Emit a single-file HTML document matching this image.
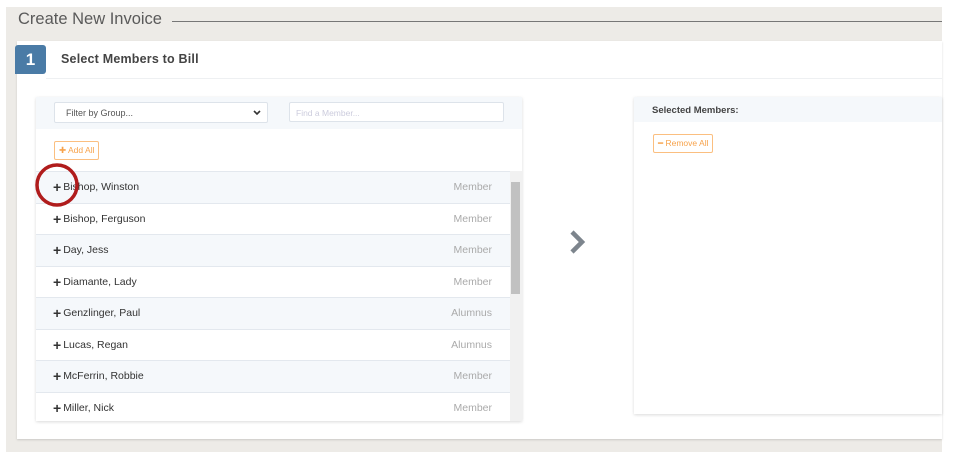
<!DOCTYPE html>
<html><head><style>
*{box-sizing:border-box;margin:0;padding:0}
body{width:954px;height:465px;background:#fff;position:relative;overflow:hidden;font-family:"Liberation Sans",sans-serif}
.bg{position:absolute;left:6px;top:7px;width:936px;height:445px;background:#edebe7}
.title{position:absolute;left:18px;top:10px;font-size:16.5px;color:#5a5a5a;}
.tline{position:absolute;left:172px;top:21px;width:770px;height:1px;background:#777}
.card{position:absolute;left:17px;top:41px;width:925px;height:398px;background:#fff;box-shadow:0 1px 2px rgba(0,0,0,.15)}
.badge{position:absolute;left:15px;top:45px;width:31px;height:29px;background:#4a7ba6;border-radius:3px 3px 3px 0;color:#fff;font-weight:bold;font-size:17px;text-align:center;line-height:29px}
.h{position:absolute;left:61px;top:52px;font-size:12.5px;color:#444;font-weight:bold;letter-spacing:.2px}
.hl{position:absolute;left:46px;top:78px;width:896px;height:1px;background:#eef0f2}
.lp{position:absolute;left:36px;top:97px;width:486px;height:324px;background:#fff;box-shadow:0 1px 3px rgba(0,0,0,.15)}
.lh{position:absolute;left:0;top:0;width:486px;height:32px;background:#f5f8fb}
.sel{position:absolute;left:18px;top:5px;width:214px;height:21px;border:1px solid #dde3ea;background:#fff;border-radius:2px;font-size:9px;color:#555;padding:5px 0 0 11px}
.sel svg{position:absolute;right:6px;top:7px}
.inp{position:absolute;left:253px;top:5px;width:215px;height:20px;border:1px solid #dde3ea;background:#fff;border-radius:2px;font-size:8.5px;color:#ccd;padding:5px 0 0 6px}
.btn{position:absolute;border:1px solid #fbbf80;border-radius:2px;color:#f7a34c;font-size:8.5px;padding:3px 4px;background:#fff}
.row{position:absolute;left:0;width:474px;height:31.5px;border-top:1px solid #e3e8ee;font-size:10.5px;color:#333;padding-left:17px;display:flex;align-items:center}
.row b{font-size:14px;margin-right:2px;font-weight:900;line-height:1}
.row span{position:absolute;right:18px;top:0;line-height:30px;color:#aaa}
.alt{background:#f5f8fb}
.sb{position:absolute;left:474px;top:74px;width:12px;height:250px;background:#f1f1f1}
.th{position:absolute;left:475px;top:85px;width:9px;height:112px;background:#c1c1c1}
.rp{position:absolute;left:634px;top:97px;width:308px;height:317px;background:#fff;box-shadow:0 1px 3px rgba(0,0,0,.15)}
.rh{position:absolute;left:0;top:0;width:308px;height:25px;background:#f5f8fb;font-size:9.5px;font-weight:bold;color:#444;padding:8px 0 0 18px}
</style></head><body>
<div class="bg"></div>
<div class="title">Create New Invoice</div><div class="tline"></div>
<div class="card"></div>
<div class="badge">1</div>
<div class="h">Select Members to Bill</div>
<div class="hl"></div>
<div class="lp">
 <div class="lh"><div class="sel">Filter by Group...<svg width="8" height="6" viewBox="0 0 8 6"><path d="M1 1l3 3 3-3" stroke="#333" stroke-width="1.6" fill="none"/></svg></div><div class="inp">Find a Member...</div></div>
 <div class="btn" style="left:18px;top:44px">✚ Add All</div>
 <div class="row alt" style="top:74px"><b>+</b>Bishop, Winston<span>Member</span></div>
 <div class="row" style="top:105.5px"><b>+</b>Bishop, Ferguson<span>Member</span></div>
 <div class="row alt" style="top:137px"><b>+</b>Day, Jess<span>Member</span></div>
 <div class="row" style="top:168.5px"><b>+</b>Diamante, Lady<span>Member</span></div>
 <div class="row alt" style="top:200px"><b>+</b>Genzlinger, Paul<span>Alumnus</span></div>
 <div class="row" style="top:231.5px"><b>+</b>Lucas, Regan<span>Alumnus</span></div>
 <div class="row alt" style="top:263px"><b>+</b>McFerrin, Robbie<span>Member</span></div>
 <div class="row" style="top:294.5px"><b>+</b>Miller, Nick<span>Member</span></div>
 <div class="sb"></div><div class="th"></div>
</div>
<svg style="position:absolute;left:568px;top:229px" width="20" height="26" viewBox="0 0 20 26"><path d="M4 3l10 10-10 10" stroke="#7d858d" stroke-width="4.5" fill="none"/></svg>
<div class="rp"><div class="rh">Selected Members:</div>
 <div class="btn" style="left:19px;top:37px">━ Remove All</div></div>
<svg style="position:absolute;left:0;top:0" width="954" height="465"><circle cx="57" cy="185" r="20" stroke="#b01c1c" stroke-width="3.5" fill="none"/></svg>
</body></html>
